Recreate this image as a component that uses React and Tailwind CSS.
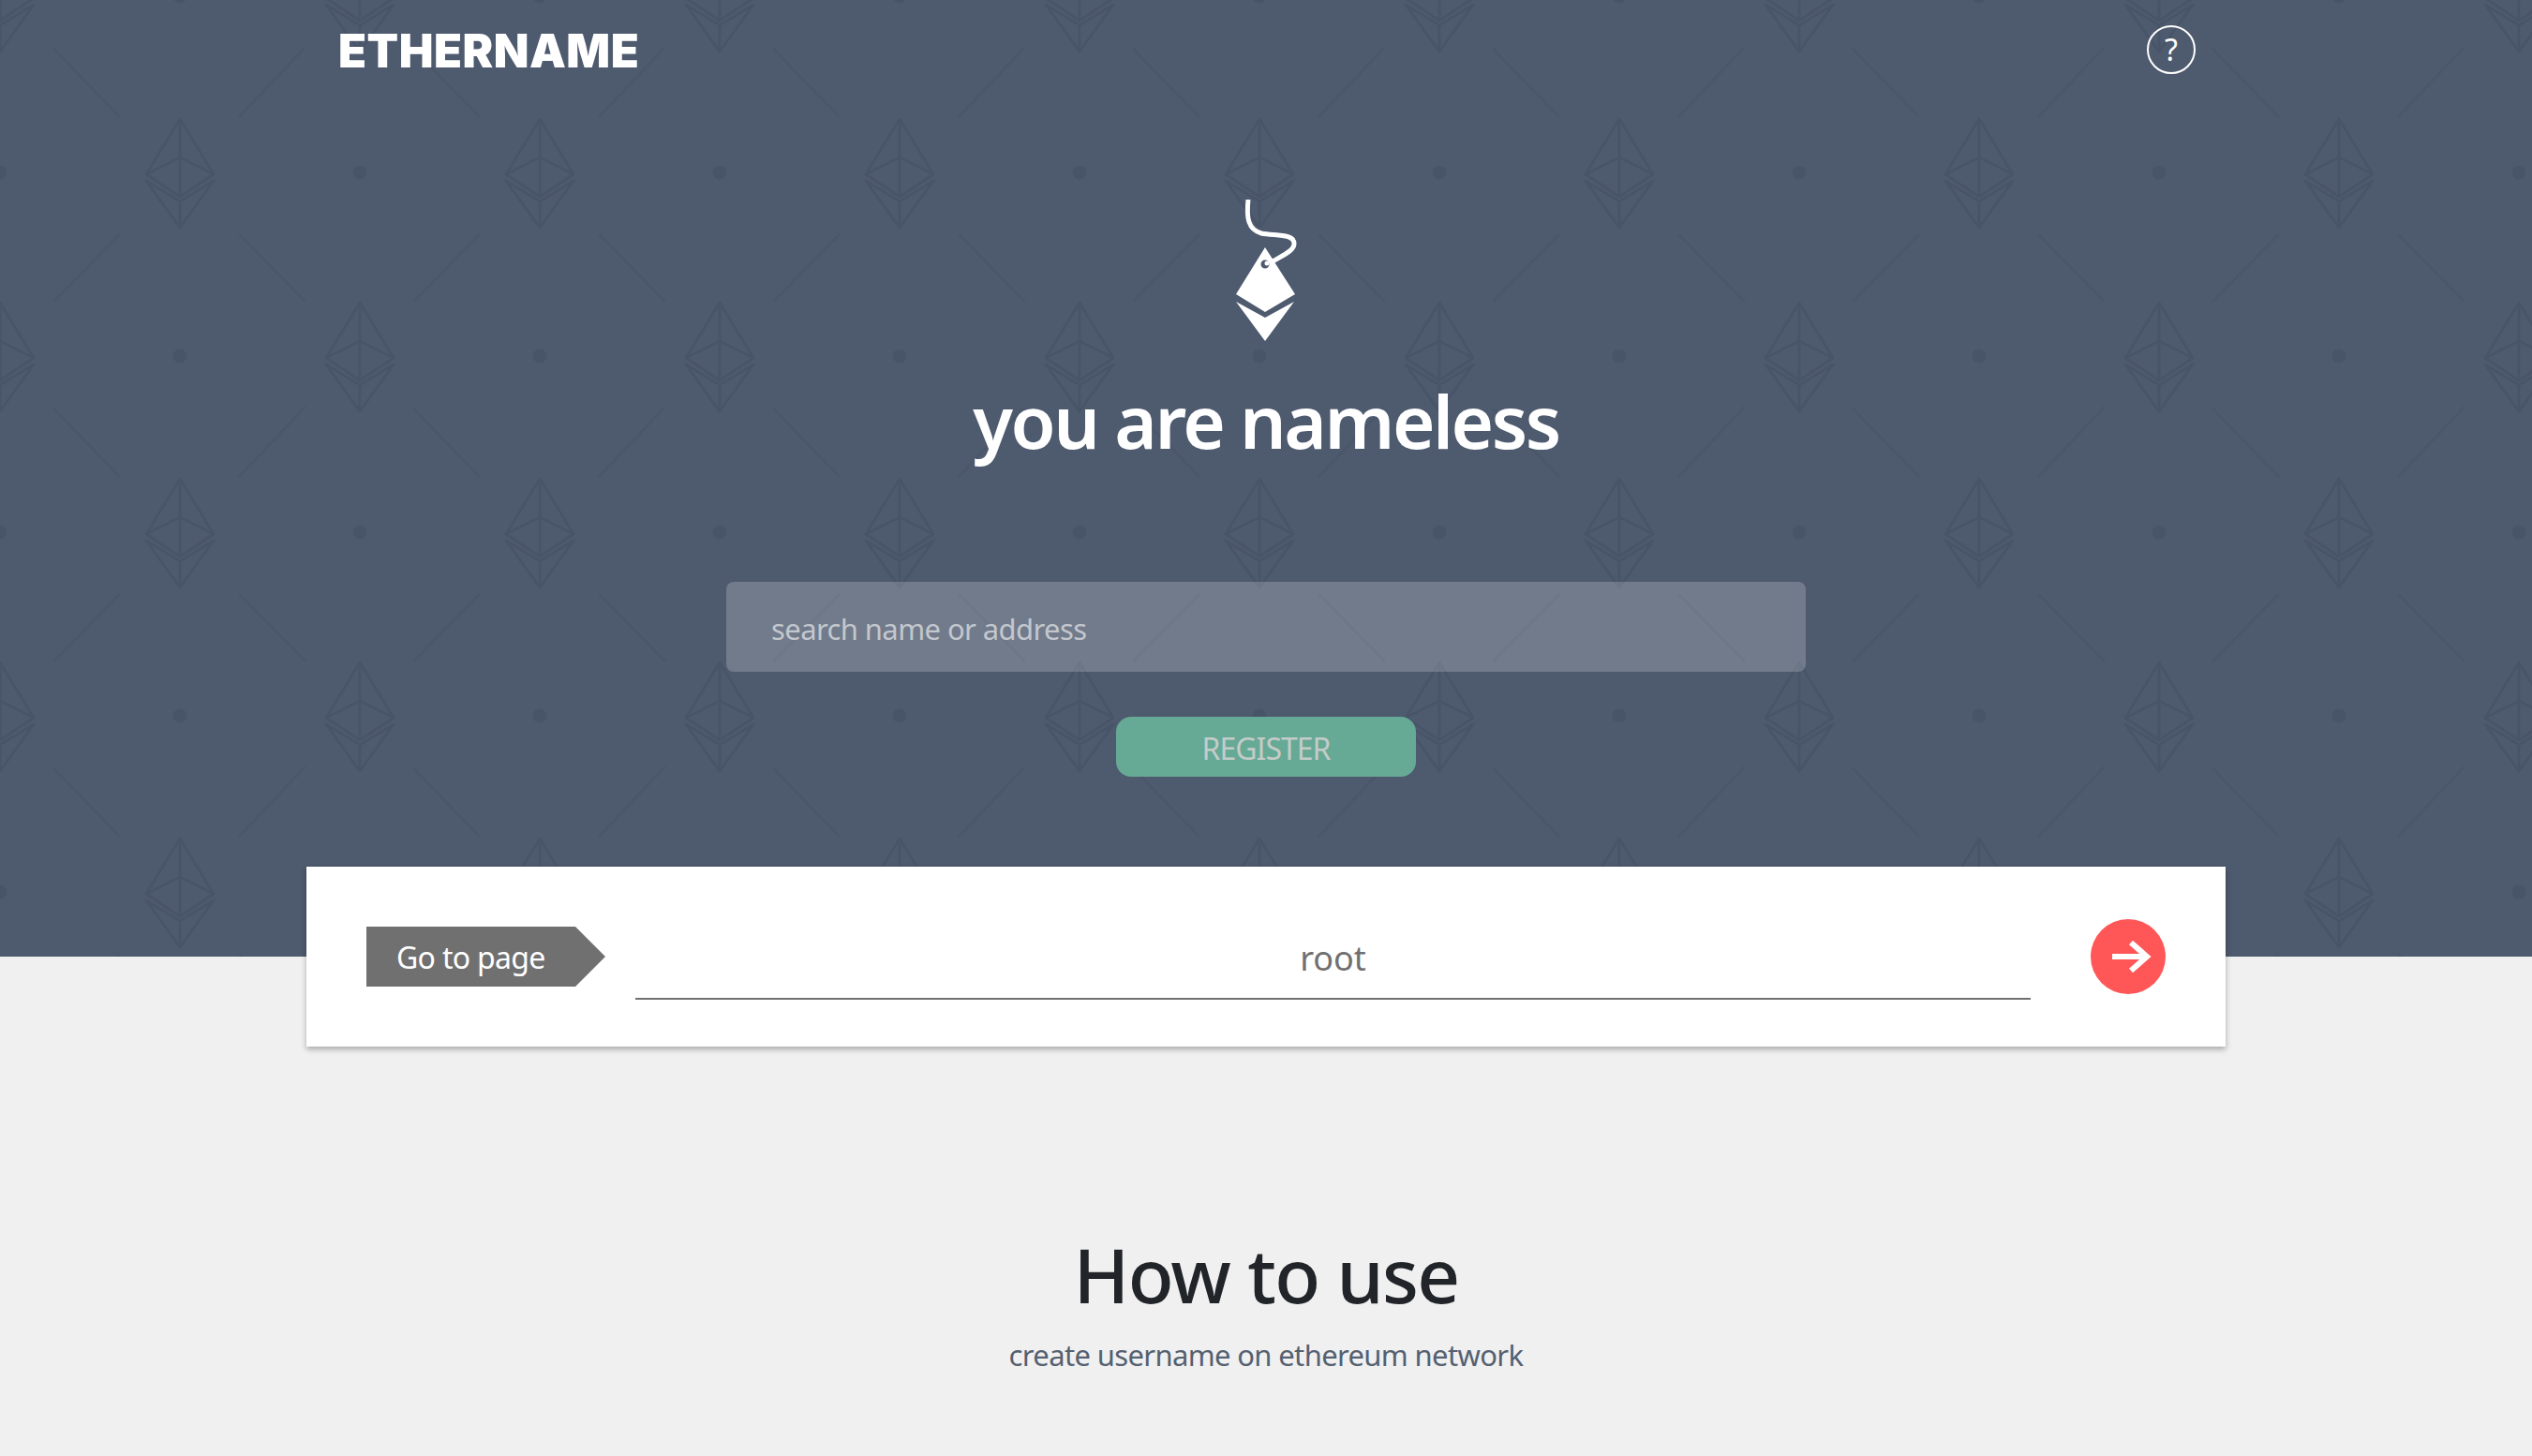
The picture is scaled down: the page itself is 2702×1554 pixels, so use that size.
const LINE = '#485468';

function Ether({ x, y }) {
  // one outlined ether mark of the background tile, centred on x,y
  return (
    <g transform={`translate(${x} ${y})`} fill="none" stroke={LINE} strokeWidth="3" strokeLinejoin="round">
      <path d="M0 -57 L-36 2 L0 26 L36 2 Z" />
      <path d="M0 -57 V26" />
      <path d="M-36 2 L0 -16 L36 2" />
      <path d="M-36 9 L0 59 L36 9 L0 31 Z" />
      <path d="M0 31 V59" />
    </g>
  );
}

function HeroPattern() {
  return (
    <svg className="absolute inset-0 w-full h-full" aria-hidden="true">
      <defs>
        <pattern id="ether-tile" width="384" height="384" patternUnits="userSpaceOnUse">
          <Ether x={192} y={184} />
          <Ether x={0} y={380} />
          <Ether x={384} y={380} />
          <Ether x={0} y={-4} />
          <Ether x={384} y={-4} />
          <circle cx="0" cy="184" r="7.5" fill={LINE} />
          <circle cx="384" cy="184" r="7.5" fill={LINE} />
          <circle cx="192" cy="380" r="7.5" fill={LINE} />
          <circle cx="192" cy="-4" r="7.5" fill={LINE} />
          <path
            d="M57 52 L128 125 M326 50 L255 125 M128 250 L57 322 M255 250 L326 322"
            stroke="#4a5669"
            strokeWidth="3"
            fill="none"
          />
        </pattern>
      </defs>
      <rect width="100%" height="100%" fill="url(#ether-tile)" />
    </svg>
  );
}

function TagLogo() {
  return (
    <svg viewBox="0 0 70 156" className="w-[70px] h-[156px]" aria-hidden="true">
      <path d="M16 0 C14 20 16 32 30 36 C44 39 65 36 65 47 C65 54 56 58 42 66" fill="none" stroke="#fff" strokeWidth="5" />
      <path fillRule="evenodd" fill="#fff" d="M34 51 L66 101 L34 120 L3 101 Z M29.5 69 a4.5 4.5 0 1 0 9 0 a4.5 4.5 0 1 0 -9 0 Z" />
      <circle cx="36" cy="68" r="2.5" fill="#fff" />
      <path fill="#fff" d="M3 109 L34 126 L65 109 L34 151 Z" />
    </svg>
  );
}

export default function App() {
  return (
    <div className="min-h-screen bg-[#f0f0f0] font-['Noto_Sans',sans-serif] overflow-hidden">
      <section className="relative h-[1021px] bg-[#4e5a6e]">
        <HeroPattern />
        <div className="relative flex flex-col items-center">
          <header className="w-[2048px] h-[106px] flex items-center justify-between pl-[34px] pr-[32px]">
            <span className="pt-[3px] font-['Inter',sans-serif] font-black text-[49px] leading-none tracking-[0.5px] text-white">ETHERNAME</span>
            <span className="w-[52px] h-[52px] rounded-full border-2 border-white flex items-center justify-center text-white text-[32px] leading-none">?</span>
          </header>
          <div className="mt-[107px]">
            <TagLogo />
          </div>
          <h1 className="mt-[28px] text-[78px] leading-[104px] tracking-[-2.5px] font-semibold text-white">you are nameless</h1>
          <div className="mt-[120px] w-[1152px] h-[96px] rounded-lg bg-white/20 flex items-center px-12 pt-1 text-[31px] tracking-[-0.6px] text-[#c3c7ce]">
            search name or address
          </div>
          <div className="mt-12 w-[320px] h-16 rounded-2xl bg-[#66a995] flex items-center justify-center pt-1 text-[32px] text-[#c3ccc9] tracking-[-1px]">
            REGISTER
          </div>
        </div>
      </section>

      <div className="relative -mt-24 mx-auto w-[2048px] h-[192px] bg-white shadow-[0_3px_6px_rgba(0,0,0,0.3)] flex items-center pl-16 pr-16">
        <div className="w-[255px] h-16 bg-[#707070] [clip-path:polygon(0_0,223px_0,100%_50%,223px_100%,0_100%)] flex items-center pl-8 pt-0.5 text-[32px] tracking-[-0.7px] text-white">
          Go to page
        </div>
        <div className="ml-8 w-[1489px] h-[92px] pt-1.5 border-b-2 border-[#707070] flex items-center justify-center text-[36px] text-[#707070]">
          root
        </div>
        <div className="ml-16 w-20 h-20 rounded-full bg-[#ff5757] flex items-center justify-center">
          <svg viewBox="0 0 80 80" className="w-20 h-20" fill="none" stroke="#fff" strokeWidth="6" aria-hidden="true">
            <path d="M23 40 H60 M43 25 L60 40 L43 55" />
          </svg>
        </div>
      </div>

      <section className="flex flex-col items-center pt-[193px]">
        <h2 className="text-[80px] leading-[100px] tracking-[-1.7px] font-medium text-[#212529]">How to use</h2>
        <p className="mt-[14px] text-[31px] leading-[44px] tracking-[-0.65px] text-[#556070]">create username on ethereum network</p>
      </section>
    </div>
  );
}
